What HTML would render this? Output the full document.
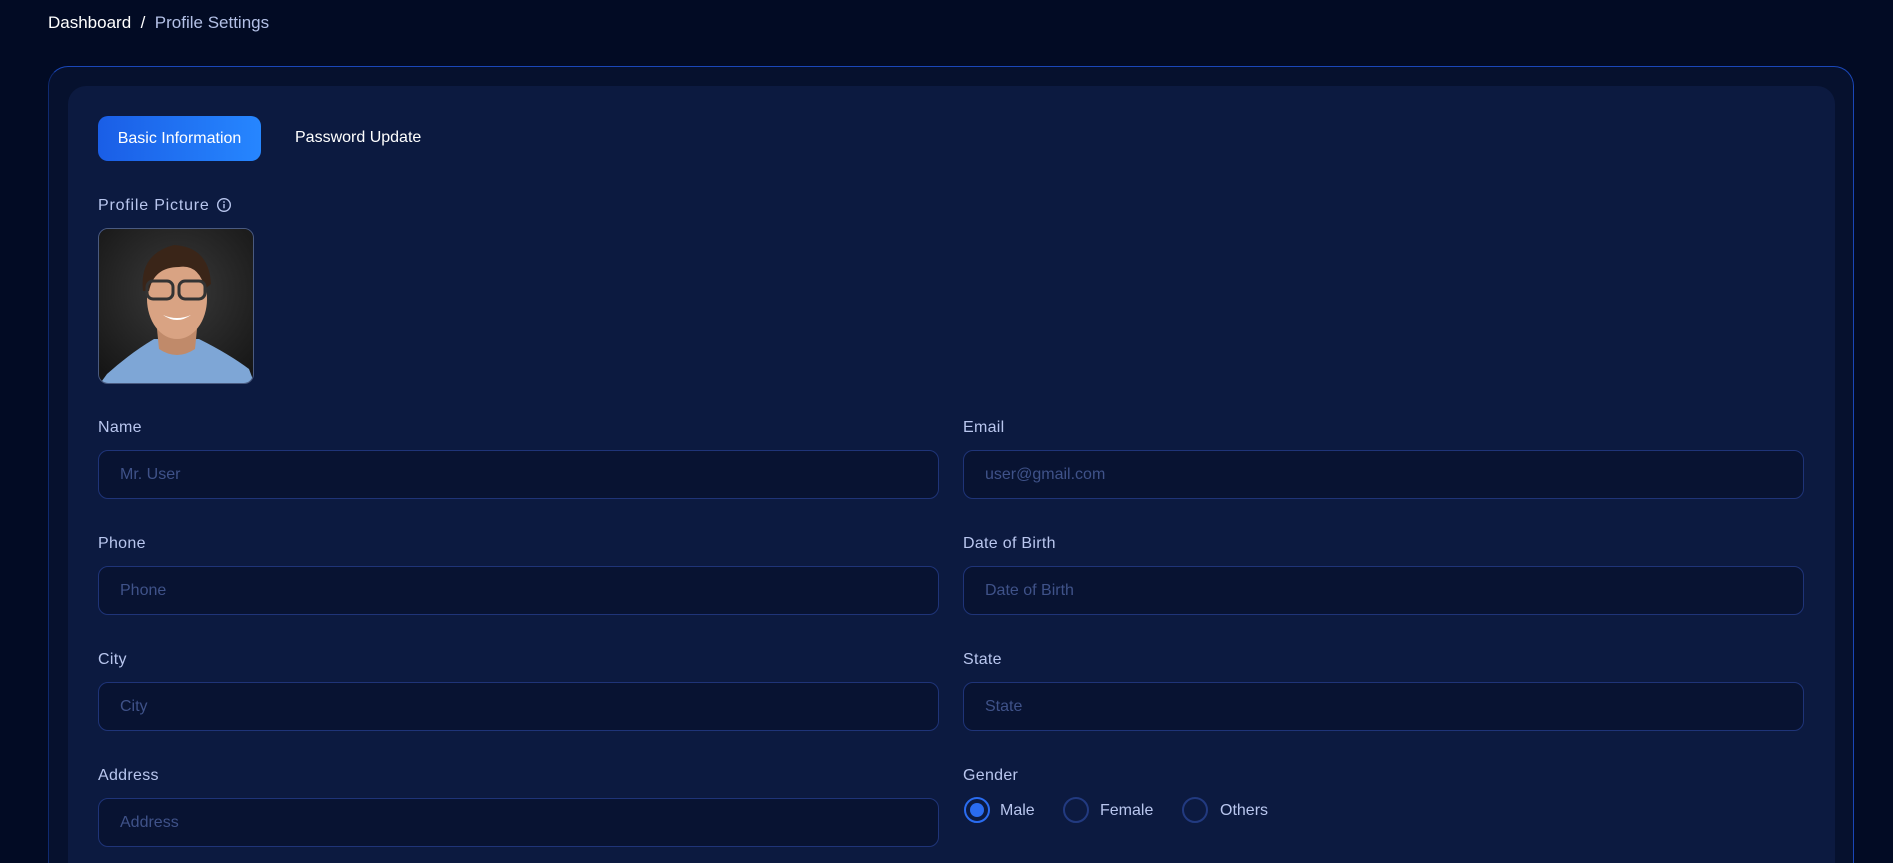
<!DOCTYPE html>
<html><head><meta charset="utf-8">
<style>
*{box-sizing:border-box;margin:0;padding:0}
html,body{width:1893px;height:863px;overflow:hidden;background:#020b24;font-family:"Liberation Sans",sans-serif}
.bc{position:absolute;left:48px;top:13px;font-size:17px;color:#fff}
.bc span{color:#b3c0e6}
.outer{position:absolute;left:48px;top:66px;width:1806px;height:797px;background:#06112e;border:1.5px solid #1a47b8;border-bottom:none;border-left-color:#0f2a70;border-radius:20px 20px 0 0}
.inner{position:absolute;left:68px;top:86px;width:1767px;height:777px;background:#0c1a40;border-radius:18px 18px 0 0}
.tab{position:absolute;left:98px;top:116px;width:163px;height:45px;border-radius:10px;background:linear-gradient(90deg,#1a5ee6,#2686ff);color:#fff;font-size:16px;line-height:45px;text-align:center}
.tab2{position:absolute;left:295px;top:129px;color:#fff;font-size:16px}
.lbl{position:absolute;color:#b9c6ee;font-size:16px;letter-spacing:0.3px}
.inp{position:absolute;width:841px;height:49px;background:#081332;border:1px solid #1f3478;border-radius:10px;color:#3f5289;font-size:16px;line-height:47px;padding-left:21px}
.pic{position:absolute;left:98px;top:228px;width:156px;height:156px;border-radius:10px;border:1px solid #4a5a80;overflow:hidden}
.rad{position:absolute;top:797px;width:26px;height:26px;border-radius:50%;border:2px solid #223a80}
.rt{position:absolute;top:802px;color:#b9c6ee;font-size:16px}
</style></head><body>
<div class="bc">Dashboard &nbsp;/&nbsp; <span>Profile Settings</span></div>
<div class="outer"></div>
<div class="inner"></div>
<div class="tab">Basic Information</div>
<div class="tab2">Password Update</div>
<div class="lbl" style="left:98px;top:197px;letter-spacing:0.8px">Profile Picture</div>
<svg style="position:absolute;left:216px;top:197px" width="16" height="16" viewBox="0 0 16 16"><circle cx="8" cy="8" r="6.3" fill="none" stroke="#b9c6ee" stroke-width="1.4"/><rect x="7.3" y="7" width="1.4" height="4.3" fill="#b9c6ee"/><circle cx="8" cy="5" r="0.9" fill="#b9c6ee"/></svg>
<div class="pic"><svg width="156" height="156" viewBox="0 0 156 156">
<defs><radialGradient id="bg" cx="0.5" cy="0.4" r="0.7"><stop offset="0" stop-color="#3a3a3a"/><stop offset="1" stop-color="#161616"/></radialGradient></defs>
<rect width="156" height="156" fill="url(#bg)"/>
<path d="M0 156 L8 145 Q30 125 55 110 L100 110 Q130 125 150 140 L156 156 Z" fill="#7ea6d6"/>
<path d="M58 100 L98 100 L96 120 Q78 132 60 120 Z" fill="#c08a6a"/>
<ellipse cx="78" cy="70" rx="30" ry="40" fill="#d9a383"/>
<path d="M44 62 Q40 25 75 16 Q110 18 112 55 L106 60 Q100 35 80 38 Q55 38 50 62 Z" fill="#3a2518"/>
<rect x="48" y="52" width="26" height="18" rx="6" fill="none" stroke="#333" stroke-width="3"/>
<rect x="80" y="52" width="26" height="18" rx="6" fill="none" stroke="#333" stroke-width="3"/>
<path d="M64 86 Q78 96 92 86 Q78 92 64 86Z" fill="#fff"/>
</svg></div>

<div class="lbl" style="left:98px;top:419px">Name</div>
<div class="inp" style="left:98px;top:450px">Mr. User</div>
<div class="lbl" style="left:963px;top:419px">Email</div>
<div class="inp" style="left:963px;top:450px">user@gmail.com</div>

<div class="lbl" style="left:98px;top:535px">Phone</div>
<div class="inp" style="left:98px;top:566px">Phone</div>
<div class="lbl" style="left:963px;top:535px">Date of Birth</div>
<div class="inp" style="left:963px;top:566px">Date of Birth</div>

<div class="lbl" style="left:98px;top:651px">City</div>
<div class="inp" style="left:98px;top:682px">City</div>
<div class="lbl" style="left:963px;top:651px">State</div>
<div class="inp" style="left:963px;top:682px">State</div>

<div class="lbl" style="left:98px;top:767px">Address</div>
<div class="inp" style="left:98px;top:798px">Address</div>
<div class="lbl" style="left:963px;top:767px">Gender</div>
<div class="rad" style="left:964px;border-color:#2a6cf0"><div style="position:absolute;left:4px;top:4px;width:14px;height:14px;border-radius:50%;background:#2a6cf0"></div></div>
<div class="rt" style="left:1000px">Male</div>
<div class="rad" style="left:1063px"></div>
<div class="rt" style="left:1100px">Female</div>
<div class="rad" style="left:1182px"></div>
<div class="rt" style="left:1220px">Others</div>
</body></html>
